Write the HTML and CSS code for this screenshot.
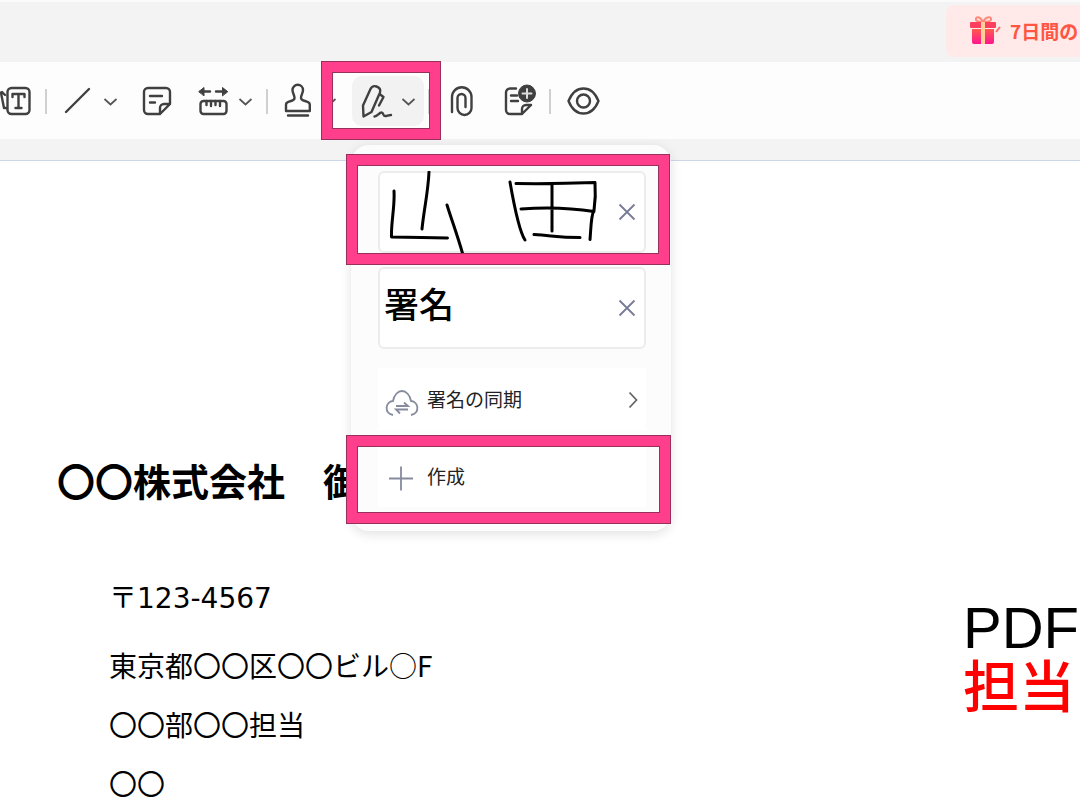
FILE: index.html
```html
<!DOCTYPE html>
<html lang="ja">
  <head>
    <meta charset="UTF-8" />
    <meta name="viewport" content="width=device-width, initial-scale=1.0" />
    <title>PDF 署名</title>
    <link rel="stylesheet" href="styles.css">
  </head>
  <body>
    <header class="titlebar">
      <a href="#" class="trial">
        <svg width="34" height="32" viewBox="0 0 34 32" aria-hidden="true">
          <defs>
            <linearGradient id="gift" x1="0" y1="0" x2="0" y2="1">
              <stop offset="0" stop-color="#ff5a4c" />
              <stop offset="1" stop-color="#ff1590" />
            </linearGradient>
          </defs>
          <path d="M14 7C11 1 6 1 7 5c1 2 4 2 7 2c3 0 7 0 8-2c1-4-5-4-8 2" fill="none" stroke="#ff8a7c" stroke-width="2" />
          <rect x="1" y="7" width="26" height="6" rx="1" fill="#fb3f5c" />
          <path d="M3 14h22v13a2 2 0 0 1-2 2H5a2 2 0 0 1-2-2z" fill="url(#gift)" />
          <path d="M12 7h4v22h-4z" fill="#ffd09a" />
          <path d="M27 17l4-5" stroke="#ff6a6a" stroke-width="2" />
        </svg>
        <span>7日間の</span>
      </a>
    </header>

    <nav class="toolbar">
      <button class="tool tool-first" aria-label="テキスト">
        <svg class="icon" width="40" height="36" viewBox="0 0 40 36">
          <rect x="15.500" y="5" width="22" height="26" rx="4" />
          <path d="M20.500 14v-3h12v3M26.500 11v14M23.500 25h6M6 11l4-2 3 3M9 10l3 15h3" />
        </svg>
      </button>
      <span class="sep"></span>
      <button class="tool" aria-label="線">
        <svg class="icon" width="32" height="36" viewBox="0 0 32 36"><path d="M3 29L26 6" /></svg>
        <svg class="chevron" width="15" height="36" viewBox="0 0 15 36"><path d="M1.500 16l6 5.500 6-5.500" /></svg>
      </button>
      <button class="tool" aria-label="ノート">
        <svg class="icon" width="30" height="36" viewBox="0 0 30 36">
          <path d="M18 31H6a4 4 0 0 1-4-4V9a4 4 0 0 1 4-4h18a4 4 0 0 1 4 4v12L18 31v-6a4 4 0 0 1 4-4h6M8 13h12M8 19.500h5" />
        </svg>
      </button>
      <button class="tool" aria-label="測定">
        <svg class="icon" width="34" height="36" viewBox="0 0 34 36">
          <path d="M4.500 8.500H14M20 8.500h9.500" />
          <path class="solid" d="M3 8.500l5-4v8zM31.500 8.500l-5-4v8z" />
          <rect x="4.500" y="18" width="26" height="13" rx="3" />
          <path d="M10.500 18v4M15 18v5M19.500 18v4M24 18v5" />
        </svg>
        <svg class="chevron" width="15" height="36" viewBox="0 0 15 36"><path d="M1.500 16l6 5.500 6-5.500" /></svg>
      </button>
      <span class="sep"></span>
      <button class="tool" aria-label="スタンプ">
        <svg class="icon" width="30" height="36" viewBox="0 0 30 36">
          <path d="M10.500 15C10.500 12 8.500 10 8.500 7a5.200 5.200 0 0 1 10.500 0C19 10 17 12 17 15c0 2 2 2.500 4 3l2.500.8c1.500.5 2.300 1.500 2.300 3V28H2v-6.200c0-1.500.8-2.500 2.300-3L7 18c2-.5 3.500-1 3.500-3zM4 32.500h20" />
        </svg>
        <svg class="chevron" width="15" height="36" viewBox="0 0 15 36"><path d="M1.500 16l6 5.500 6-5.500" /></svg>
      </button>

      <div class="sign">
        <button class="tool tool-active" aria-label="署名" aria-expanded="true">
          <svg class="icon" width="33" height="36" viewBox="0 0 33 36">
            <path d="M3.500 33.500L3 22.500L10.500 6c1-2 3-3.500 6-2.500c3 1 4.500 3 3.500 6L11.500 29zM19.500 11l4 3-4.500 8.500M14.500 33.500c3 0 4.500-4 7-4c2.500 0 1 3.500 3.500 3.500c2 0 3.500-1 6-1" />
          </svg>
          <svg class="chevron" width="15" height="36" viewBox="0 0 15 36"><path d="M1.500 16l6 5.500 6-5.500" /></svg>
        </button>
        <span class="frame frame-tool"></span>

        <div class="menu">
          <div class="card">
            <button class="card-pick" aria-label="手書きの署名">
              <svg class="ink" width="228" height="82" viewBox="0 0 228 82">
                <path d="M14 20C15 36 11 50 11.500 66q14 0 30 .5l26 .5M49 1C48 22 44 38 42 58" />
                <path d="M67 34C72 50 78 66 83 84" />
                <path d="M130 11C134 34 139 60 145 69M136 12.500q40 .5 79-1q1 14-1 28c-3 4-3 18-4 29M141 38q38-3 73 2.500M172 14v46M154 63.500c18 1 24 3 46 3" />
              </svg>
            </button>
            <button class="remove" aria-label="削除">
              <svg width="18" height="18" viewBox="0 0 18 18"><path d="M1.500 1.500l15 15M16.500 1.500l-15 15" /></svg>
            </button>
            <span class="frame frame-card"></span>
          </div>
          <div class="card">
            <button class="card-pick card-text">署名</button>
            <button class="remove" aria-label="削除">
              <svg width="18" height="18" viewBox="0 0 18 18"><path d="M1.500 1.500l15 15M16.500 1.500l-15 15" /></svg>
            </button>
          </div>
          <button class="row">
            <svg class="row-icon" width="34" height="36" viewBox="0 0 34 36">
              <path d="M8 34c-9-2-8-13 0-14c1-6 5-10 9-10s8 4 9 10c8 1 9 12 0 14M11 25h12l-4-3.500M23 28.500H11l4 4" />
            </svg>
            <span>署名の同期</span>
            <svg class="row-arrow" width="10" height="20" viewBox="0 0 10 20"><path d="M1.500 3.500l7 7.500-7 7.500" /></svg>
          </button>
          <button class="row">
            <svg class="row-icon" width="34" height="36" viewBox="0 0 34 36"><path d="M16 8.500v24M4 20.500h24" /></svg>
            <span>作成</span>
            <span class="frame frame-row"></span>
          </button>
        </div>
      </div>

      <span class="sep"></span>
      <button class="tool" aria-label="添付ファイル">
        <svg class="icon" width="30" height="36" viewBox="0 0 30 36">
          <path d="M6 29V14a9.700 9.700 0 0 1 19.500 0v11a7 7 0 0 1-14 0V15a4 4 0 0 1 8 0v9" />
        </svg>
      </button>
      <button class="tool" aria-label="ノートを追加">
        <svg class="icon" width="36" height="36" viewBox="0 0 36 36">
          <path d="M16 5.500h-6a4 4 0 0 0-4 4V27a4 4 0 0 0 4 4h12l9-9M22 31v-5a4 4 0 0 1 4-4h5M11 12.500h6M11 18h7" />
          <circle class="solid" cx="27" cy="10.500" r="8.500" />
          <path class="plus" d="M27 6v9M22.500 10.500h9" />
        </svg>
      </button>
      <span class="sep"></span>
      <button class="tool" aria-label="表示">
        <svg class="icon" width="34" height="36" viewBox="0 0 34 36">
          <path d="M1.500 18C5 9.500 10 5.500 16.500 5.500S28 9.500 31.500 18C28 26.500 23 30.500 16.500 30.500S5 26.500 1.500 18z" />
          <circle cx="16.500" cy="18" r="6.500" />
        </svg>
      </button>
    </nav>

    <main class="document">
      <section class="letter">
        <h1>〇〇株式会社　御中</h1>
        <address>
          <p class="postal">〒<span>123-4567</span></p>
          <p>東京都〇〇区〇〇ビル○F</p>
          <p>〇〇部〇〇担当</p>
          <p>〇〇</p>
        </address>
      </section>
      <aside class="note">
        <p>PDF</p>
        <p class="red">担当</p>
      </aside>
    </main>
  </body>
</html>
```
FILE: styles.css
```css
* {
  box-sizing: border-box;
  margin: 0;
  padding: 0;
}

body {
  display: flex;
  flex-direction: column;
  height: 100vh;
  overflow: hidden;
  font-family: "Noto Sans CJK JP", sans-serif;
  color: #000;
  background-color: #f3f3f3;
}

button {
  border: none;
  background: none;
  font: inherit;
  color: inherit;
  cursor: pointer;
}

svg {
  display: block;
  flex-shrink: 0;
}

/* top bar */
.titlebar {
  display: flex;
  justify-content: flex-end;
  flex-shrink: 0;
  height: 62px;
  padding: 3px 0 5px;
  border-top: 2px solid #fafafa;
}

.trial {
  display: flex;
  align-items: center;
  gap: 7px;
  width: 134px;
  padding-left: 23px;
  border-radius: 8px 0 0 8px;
  background-color: #ffe9e9;
  color: #ff5543;
  font-size: 19px;
  font-weight: bold;
  line-height: 28px;
  text-decoration: none;
  white-space: nowrap;
}

/* toolbar */
.toolbar {
  display: flex;
  align-items: center;
  flex-shrink: 0;
  padding: 14px 0 13px;
  background-color: #fdfdfd;
}

.tool {
  display: flex;
  align-items: center;
  gap: 8px;
  height: 50px;
  padding: 0 12px;
  border-radius: 10px;
}

.tool-first {
  margin-left: -20px;
}

.tool-active {
  padding: 0 8px;
  background-color: #f2f2f2;
}

.sep {
  width: 2px;
  height: 25px;
  margin: 0 4px 0 1px;
  background-color: #d0d0d0;
}

.icon {
  fill: none;
  stroke: #404040;
  stroke-width: 2.4;
  stroke-linecap: round;
  stroke-linejoin: round;
}

.icon .solid {
  fill: #404040;
  stroke-width: 1;
}

.icon .plus {
  stroke: #ddd;
  stroke-width: 2;
}

.chevron {
  fill: none;
  stroke: #555;
  stroke-width: 1.7;
}

.sign {
  position: relative;
  width: 72px;
  margin: 0 3px;
}

/* pink highlight frames */
.frame {
  position: absolute;
  z-index: 2;
  border: 11px solid #ff3f8c;
  outline: 1px solid #98305c;
  outline-offset: -1px;
  box-shadow: inset 0 0 0 1px #98305c;
  pointer-events: none;
}

.frame-tool {
  top: -15px;
  left: -31px;
  width: 120px;
  height: 79px;
}

.frame-card {
  top: -19px;
  left: -34px;
  width: 324px;
  height: 111px;
}

.frame-row {
  top: -10px;
  left: -32px;
  width: 325px;
  height: 89px;
}

/* signature menu */
.menu {
  position: absolute;
  top: 69px;
  left: -1px;
  z-index: 1;
  width: 320px;
  padding: 26px 25px 24px 27px;
  border-radius: 18px;
  background-color: #fcfcfc;
  box-shadow: 0 3px 12px rgba(0, 0, 0, 0.12);
}

.card {
  position: relative;
  display: flex;
  align-items: center;
  height: 82px;
  margin-bottom: 14px;
  padding-right: 8px;
  border: 2px solid #ececec;
  border-radius: 6px;
  background-color: #fff;
}

.card-pick {
  flex: 1;
  min-width: 0;
  text-align: left;
}

.card-text {
  padding: 0 0 10px 4px;
  font-size: 35px;
  font-weight: 500;
  line-height: 50px;
}

.ink {
  fill: none;
  stroke: #000;
  stroke-width: 3;
  stroke-linecap: round;
  stroke-linejoin: round;
}

.remove svg {
  fill: none;
  stroke: #777b93;
  stroke-width: 1.8;
}

.row {
  position: relative;
  display: flex;
  align-items: center;
  gap: 8px;
  width: 100%;
  height: 62px;
  margin-top: 15px;
  padding: 0 8px 0 7px;
  background-color: #fff;
  color: #222;
  font-size: 19px;
  line-height: 28px;
}

.card + .row {
  margin-top: 19px;
}

.row-icon {
  fill: none;
  stroke: #868b9d;
  stroke-width: 1.8;
}

.row-arrow {
  margin-left: auto;
  fill: none;
  stroke: #666;
  stroke-width: 1.8;
}

/* document page */
.document {
  display: flex;
  justify-content: space-between;
  flex: 1;
  min-height: 0;
  margin-top: 21px;
  padding-left: 57px;
  border-top: 1px solid #cdd6e8;
  background-color: #fff;
  overflow: hidden;
}

.letter h1 {
  margin-top: 291px;
  font-size: 38px;
  line-height: 56px;
}

.letter address {
  padding-left: 52px;
  font-size: 28px;
  font-style: normal;
  line-height: 59px;
}

.letter .postal {
  margin: 77px 0 26px;
  line-height: 22px;
}

.postal span {
  font-family: "DejaVu Sans", sans-serif;
}

.note {
  width: 117px;
  margin-top: 437px;
  font-family: "Liberation Sans", "Noto Sans CJK JP", sans-serif;
  font-size: 58px;
  line-height: 60px;
  white-space: nowrap;
}

.note .red {
  color: #ff0000;
  font-size: 56px;
  font-weight: 500;
}
```
